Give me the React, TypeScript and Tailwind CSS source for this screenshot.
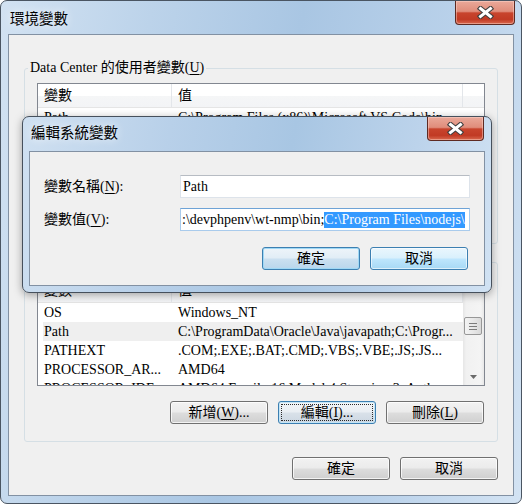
import React from "react";

const serif = "font-['Liberation_Serif','Noto_Sans_CJK_TC',serif]";
const sans = "font-['Noto_Sans_CJK_TC','Liberation_Sans',sans-serif]";

type Kind = "normal" | "focus" | "default" | "hover";

const btnStyles: Record<Kind, string> = {
  normal:
    "border-[#707070] bg-[linear-gradient(to_bottom,#f2f2f2_0%,#ebebeb_48%,#dddddd_52%,#cfcfcf_100%)] shadow-[inset_0_0_0_1px_rgba(255,255,255,0.75)]",
  focus:
    "border-[#3c7fb1] bg-[linear-gradient(to_bottom,#f2f5f8_0%,#e9eef3_48%,#d9e1e9_52%,#ccd7e2_100%)] shadow-[inset_0_0_0_1px_#c4e5f6]",
  default:
    "border-[#3c7fb1] bg-[linear-gradient(to_bottom,#eef4f9_0%,#e1edf6_48%,#cbe0f0_52%,#b9d6ec_100%)] shadow-[inset_0_0_0_1px_#9fd8f5]",
  hover:
    "border-[#3c7fb1] bg-[linear-gradient(to_bottom,#eaf6fd_0%,#d9f0fc_48%,#bee6fd_52%,#a7d9f5_100%)] shadow-[inset_0_0_0_1px_rgba(255,255,255,0.6)]",
};

function Key({ children }: { children: React.ReactNode }) {
  return <span className="underline decoration-1 underline-offset-[2px]">{children}</span>;
}

function WinButton({ kind = "normal", children }: { kind?: Kind; children: React.ReactNode }) {
  return (
    <div
      className={`flex h-[23px] w-[98px] shrink-0 items-center justify-center rounded-[3px] border text-[14px] leading-none text-black ${btnStyles[kind]}`}
    >
      {kind === "focus" ? (
        <div className="flex h-[17px] w-[92px] items-center justify-center border border-dotted border-[#2a2a2a]">
          {children}
        </div>
      ) : (
        children
      )}
    </div>
  );
}

function CloseButton({ size }: { size: string }) {
  return (
    <div
      className={`flex shrink-0 items-center justify-center rounded-b-[4px] border border-t-0 border-[#5e2a22] bg-[linear-gradient(to_bottom,#eaa99a_0%,#e08d7b_45%,#c8442d_52%,#c13a24_80%,#d9694f_100%)] shadow-[inset_0_0_0_1px_rgba(255,220,210,0.45)] ${size}`}
    >
      <svg width="17" height="13" viewBox="0 0 17 13">
        <path d="M3.5 2.5 L13.5 10.5 M13.5 2.5 L3.5 10.5" stroke="#3f3f3f" strokeWidth="5" strokeLinecap="square" />
        <path d="M3.5 2.5 L13.5 10.5 M13.5 2.5 L3.5 10.5" stroke="#ffffff" strokeWidth="3" strokeLinecap="square" />
      </svg>
    </div>
  );
}

function Header() {
  return (
    <div className="flex h-[24px] shrink-0 border-b border-[#e5e5e5] bg-[linear-gradient(to_bottom,#ffffff_0%,#ffffff_50%,#f5f6f7_52%,#f3f4f6_100%)]">
      <div className="flex w-[134px] items-center border-r border-[#e3e6ea] pl-[6px]">變數</div>
      <div className="flex w-[291px] items-center border-r border-[#e3e6ea] pl-[6px]">值</div>
    </div>
  );
}

function Row({ name, value, selected }: { name: string; value: string; selected?: boolean }) {
  return (
    <div
      className={`ml-[5px] flex h-[19px] shrink-0 items-center whitespace-nowrap ${selected ? "bg-[#efefef]" : ""}`}
    >
      <div className="w-[129px] overflow-hidden pl-[1px]">{name}</div>
      <div className="flex-1 overflow-hidden pl-[6px]">{value}</div>
    </div>
  );
}

const userVars = [
  { name: "Path", value: "C:\\Program Files (x86)\\Microsoft VS Code\\bin" },
  { name: "TEMP", value: "%USERPROFILE%\\AppData\\Local\\Temp" },
  { name: "TMP", value: "%USERPROFILE%\\AppData\\Local\\Temp" },
];

const sysVars = [
  { name: "OS", value: "Windows_NT" },
  { name: "Path", value: "C:\\ProgramData\\Oracle\\Java\\javapath;C:\\Progr...", selected: true },
  { name: "PATHEXT", value: ".COM;.EXE;.BAT;.CMD;.VBS;.VBE;.JS;.JS..." },
  { name: "PROCESSOR_AR...", value: "AMD64" },
  { name: "PROCESSOR_IDE...", value: "AMD64 Family 16 Model 4 Stepping 3, Auth..." },
];

function ScrollBar() {
  return (
    <div className="flex w-[21px] flex-col bg-[linear-gradient(to_right,#e6e6e6_0%,#f1f1f1_15%,#f4f4f4_85%,#e8e8e8_100%)]">
      <div className="flex h-[17px] items-center justify-center">
        <svg width="7" height="4" viewBox="0 0 7 4">
          <polygon points="0,4 7,4 3.5,0" fill="#6a6a6a" />
        </svg>
      </div>
      <div className="ml-[1px] mt-[21px] flex h-[18px] w-[18px] flex-col items-center justify-center gap-[2px] rounded-[2px] border border-[#979797] bg-[linear-gradient(to_right,#f3f3f3,#e8e8e8_50%,#d9d9d9)]">
        <div className="h-[1px] w-[8px] bg-[#7c7c7c]" />
        <div className="h-[1px] w-[8px] bg-[#7c7c7c]" />
        <div className="h-[1px] w-[8px] bg-[#7c7c7c]" />
      </div>
      <div className="flex-1" />
      <div className="flex h-[17px] items-center justify-center">
        <svg width="7" height="4" viewBox="0 0 7 4">
          <polygon points="0,0 7,0 3.5,4" fill="#6a6a6a" />
        </svg>
      </div>
    </div>
  );
}

export default function App() {
  return (
    <div className={`${serif} relative h-[504px] w-[522px] overflow-hidden text-[14px] text-black`}>
      {/* 主視窗 */}
      <div className="flex h-[504px] w-[522px] flex-col rounded-[7px] border border-[#4a5562] bg-[linear-gradient(100deg,#d2e2f2_0%,#bcd3ea_25%,#a9c6e3_50%,#b9d1ea_75%,#d3e3f3_100%)]">
        <div className="flex h-[33px] shrink-0 items-start justify-between">
          <span
            className={`${sans} ml-[9px] mt-[7px] text-[14.5px] leading-[20px] text-black [text-shadow:0_0_8px_rgba(255,255,255,0.95)]`}
          >
            環境變數
          </span>
          <CloseButton size="mr-[6px] h-[24px] w-[60px]" />
        </div>

        <div className="mx-[7px] flex h-[462px] flex-col border border-[#8291a3] bg-[#f0f0f0]">
          <fieldset className="ml-[15px] mt-[25px] h-[184px] w-[474px] rounded-[3px] border border-[#d5dfe5]">
            <legend className="ml-[3px] h-[16px] px-[2px] leading-[16px]">
              Data Center 的使用者變數(<Key>U</Key>)
            </legend>
            <div className="ml-[12px] mt-[7px] flex h-[105px] w-[448px] flex-col border border-[#828790] bg-white">
              <Header />
              <div className="w-[425px]">
                {userVars.map((v) => (
                  <Row key={v.name} name={v.name} value={v.value} />
                ))}
              </div>
            </div>
            <div className="mr-[13px] mt-[12px] flex justify-end gap-[10px]">
              <WinButton>
                新增(<Key>N</Key>)...
              </WinButton>
              <WinButton>
                編輯(<Key>E</Key>)...
              </WinButton>
              <WinButton>
                刪除(<Key>D</Key>)
              </WinButton>
            </div>
          </fieldset>

          <fieldset className="ml-[15px] mt-[10px] h-[188px] w-[474px] rounded-[3px] border border-[#d5dfe5]">
            <legend className="ml-[3px] h-[16px] px-[2px] leading-[16px]">
              系統變數(<Key>S</Key>)
            </legend>
            <div className="ml-[12px] mt-[8px] flex h-[108px] w-[448px] border border-[#828790] bg-white">
              <div className="flex w-[425px] flex-col overflow-hidden">
                <Header />
                {sysVars.map((v) => (
                  <Row key={v.name} name={v.name} value={v.value} selected={v.selected} />
                ))}
              </div>
              <ScrollBar />
            </div>
            <div className="mr-[13px] mt-[15px] flex justify-end gap-[10px]">
              <WinButton>
                新增(<Key>W</Key>)...
              </WinButton>
              <WinButton kind="focus">
                編輯(<Key>I</Key>)...
              </WinButton>
              <WinButton>
                刪除(<Key>L</Key>)
              </WinButton>
            </div>
          </fieldset>

          <div className="mr-[15px] mt-[15px] flex justify-end gap-[10px]">
            <WinButton>確定</WinButton>
            <WinButton>取消</WinButton>
          </div>
        </div>
      </div>

      {/* 編輯系統變數 對話框 */}
      <div className="absolute left-[22px] top-[116px] flex h-[177px] w-[470px] flex-col rounded-[7px] border border-[#46505c] bg-[linear-gradient(100deg,#cfe0f1_0%,#b8d0e9_30%,#a8c6e3_55%,#bcd3eb_80%,#d1e2f3_100%)] shadow-[0_2px_8px_rgba(0,0,0,0.35)]">
        <div className="flex h-[34px] shrink-0 items-start justify-between">
          <span
            className={`${sans} ml-[8px] mt-[5px] text-[14.5px] leading-[20px] text-black [text-shadow:0_0_8px_rgba(255,255,255,0.95)]`}
          >
            編輯系統變數
          </span>
          <CloseButton size="mr-[7px] h-[24px] w-[57px]" />
        </div>
        <div className="mx-[6px] flex h-[135px] flex-col border border-[#8291a3] bg-[#f0f0f0] pl-[14px]">
          <div className="mt-[23px] flex h-[23px] items-center">
            <div className="w-[136px]">
              變數名稱(<Key>N</Key>):
            </div>
            <div className="flex h-[23px] w-[290px] items-center border border-[#dde3ea] border-t-[#b7bcc3] bg-white pl-[2px]">
              Path
            </div>
          </div>
          <div className="mt-[10px] flex h-[23px] items-center">
            <div className="w-[136px]">
              變數值(<Key>V</Key>):
            </div>
            <div className="flex h-[23px] w-[290px] items-center overflow-hidden whitespace-nowrap border border-[#a9cbec] border-t-[#6ea3d6] bg-white pl-[1px]">
              <span>:\devphpenv\wt-nmp\bin;</span>
              <span className="bg-[#3399ff] leading-[16px] text-white">C:\Program Files\nodejs\</span>
            </div>
          </div>
          <div className="mr-[16px] mt-[16px] flex justify-end gap-[10px]">
            <WinButton kind="default">確定</WinButton>
            <WinButton kind="hover">取消</WinButton>
          </div>
        </div>
      </div>
    </div>
  );
}
